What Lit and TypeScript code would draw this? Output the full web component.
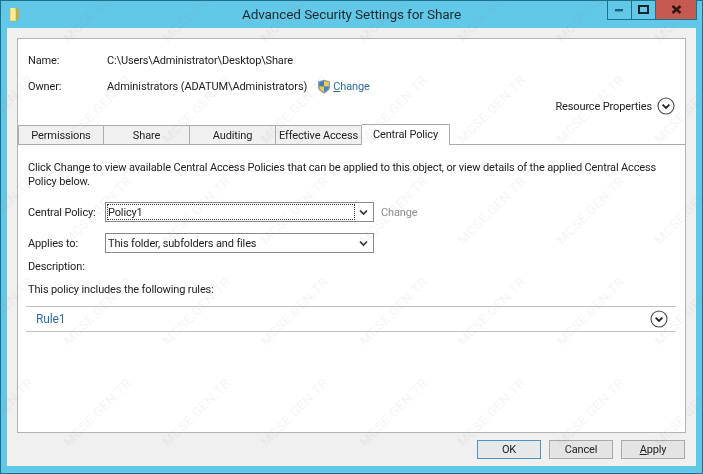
import { LitElement, html, css, svg } from "lit";
import { customElement } from "lit/decorators.js";

const chevron = (size: number) => html`<svg class="chev" width=${size} height=${size} viewBox="0 0 18 18">
  <circle cx="9" cy="9" r="8" fill="#fff" stroke="#4a4a4a" stroke-width="1.1"/>
  <path d="M5.6 7.6 9 11l3.4-3.4" fill="none" stroke="#222" stroke-width="1.8"/>
</svg>`;

const arrow = html`<svg width="9" height="7" viewBox="0 0 9 7"><path d="M1 1.5 4.5 5 8 1.5" fill="none" stroke="#333" stroke-width="1.7"/></svg>`;

const shield = svg`<path d="M7 .8 13 2.6V7.5C13 11 10.2 13.2 7 14.4 3.8 13.2 1 11 1 7.5V2.6Z" fill="#8f9aa6"/>
  <path d="M7 2 7 7.5H2.2V3.4Z" fill="#3c7fc4"/>
  <path d="M7 2 11.8 3.4V7.5H7Z" fill="#f0cf4e"/>
  <path d="M2.2 7.5H7V13C4.4 12 2.4 10.2 2.2 7.5Z" fill="#edc94a"/>
  <path d="M7 7.5H11.8C11.6 10.2 9.6 12 7 13Z" fill="#3f86c9"/>`;

@customElement("app-root")
export class AppRoot extends LitElement {
  static styles = css`
    :host { display: block; width: 703px; height: 474px; overflow: hidden; position: relative;
      font-family: "Roboto", "Open Sans", sans-serif; font-size: 11px; letter-spacing: -0.14px; color: #222; }
    * { box-sizing: border-box; }
    .window { width: 703px; height: 474px; display: flex; flex-direction: column;
      background: #62c8e8; border: 1px solid #1d6f8c; filter: blur(0.35px); }
    .title { height: 27px; flex: none; position: relative; display: flex; align-items: flex-start; justify-content: center; }
    .title-text { font-size: 13.6px; letter-spacing: -0.12px; color: #1c2b33; margin-top: 5px; }
    .folder { position: absolute; left: 8px; top: 5px; }
    .controls { position: absolute; right: 5px; top: -1px; display: flex; height: 20px; }
    .ctl { width: 24px; border: 1px solid #1d6f8c; border-top: none; border-right: none;
      display: flex; align-items: center; justify-content: center; }
    .ctl.close { width: 42px; background: #c75a50; border-right: 1px solid #1d6f8c; }
    .client { flex: none; width: 689px; height: 438px; margin-left: 6px; background: #f0f0f0;
      padding: 10px 10px 0; display: flex; flex-direction: column; }
    .panel { width: 669px; height: 395px; background: #fff; border: 1px solid #b4b4b4; flex: none;
      display: flex; flex-direction: column; }
    .row { display: flex; align-items: center; padding-left: 10px; }
    .row.r1 { margin-top: 13px; height: 16px; }
    .row.r2 { margin-top: 10px; height: 16px; }
    .label { width: 79px; flex: none; }
    .owner { letter-spacing: -0.09px; }
    .link { color: #2f6ea5; }
    .shield { margin-left: 10px; margin-right: 2px; flex: none; }
    .res { display: flex; justify-content: flex-end; align-items: center; gap: 5px; padding-right: 10px;
      margin-top: 2px; height: 20px; }
    .tabs { display: flex; align-items: flex-end; height: 20px; flex: none; margin-top: 9px;
      border-bottom: 1px solid #acacac; }
    .tab { height: 19px; width: 86px; background: #f0f0f0; border: 1px solid #acacac; border-left: none; border-bottom: none;
      display: flex; align-items: center; justify-content: center; }
    .tab:first-child { border-left: 1px solid #acacac; }
    .tab.active { background: #fff; height: 21px; margin-bottom: -1px; width: 88px; padding-bottom: 1px; }
    .body { padding: 16px 10px 0; display: flex; flex-direction: column; flex: 1; }
    .para { line-height: 14px; height: 28px; white-space: nowrap; }
    .form { display: grid; grid-template-columns: 77px 269px auto; align-items: center; margin-top: 13px; row-gap: 11px; }
    .combo { height: 20px; width: 269px; border: 1px solid #8a8a8a; background: #fff; display: flex; align-items: center;
      padding: 1px; }
    .value { flex: 1; height: 100%; display: flex; align-items: center; padding-left: 0; }
    .value.focus { border: 1px dotted #333; }
    .plain { padding-left: 1px; }
    .drop { width: 17px; display: flex; align-items: center; justify-content: center; flex: none; }
    .grey { color: #8d8d8d; margin-left: 7px; }
    .desc { margin-top: 5px; height: 16px; display: flex; align-items: center; }
    .incl { margin-top: 7px; height: 16px; display: flex; align-items: center; }
    .rule { margin: 9px 0 0 -2px; width: 650px; height: 26px; border-top: 1px solid #c0c0c0; border-bottom: 1px solid #c0c0c0;
      display: flex; align-items: center; justify-content: space-between; padding: 0 8px 0 10px; }
    .rule .link { font-size: 12px; }
    .chev { display: block; flex: none; }
    .buttons { display: flex; justify-content: flex-end; gap: 8px; padding-right: 1px; margin-top: 7px; }
    .btn { width: 64px; height: 19px; background: #e4e4e4; border: 1px solid #a8a8a8;
      display: flex; align-items: center; justify-content: center; }
    .btn.default { border-color: #4f93c0; background: #e6e9ec; }
    .marks { position: absolute; inset: 0; pointer-events: none; overflow: hidden; }
    .mark { position: absolute; width: 110px; text-align: center; font-size: 13.5px; letter-spacing: .3px;
      color: rgba(120, 120, 120, .09); transform: rotate(-45deg); white-space: nowrap; filter: blur(0.4px); }
  `;

  private marks() {
    const out = [];
    for (let r = 0; r < 5; r++) {
      for (let c = 0; c < 8; c++) {
        const cx = -1.5 + c * 98.5;
        const cy = 9 + r * 101;
        out.push(html`<span class="mark" style="left:${cx - 55}px;top:${cy - 9}px">MCSE.GEN.TR</span>`);
      }
    }
    return out;
  }

  render() {
    return html`
      <div class="window">
        <div class="title">
          <svg class="folder" width="14" height="16" viewBox="0 0 14 16">
            <path d="M1 2h5l1 1.2V15H1Z" fill="#f4d66a"/>
            <path d="M7 2.5h3V12L7 15Z" fill="#c9a83c"/>
            <path d="M2 2h4v12H2Z" fill="#fbe9a0"/>
          </svg>
          <span class="title-text">Advanced Security Settings for Share</span>
          <div class="controls">
            <div class="ctl"><svg width="9" height="4"><rect y="1" width="8" height="2.4" fill="#1d5f78"/></svg></div>
            <div class="ctl"><svg width="11" height="9"><rect x="1" y="1" width="9" height="7" fill="none" stroke="#10242e" stroke-width="2"/></svg></div>
            <div class="ctl close"><svg width="11" height="9" viewBox="0 0 11 9"><path d="M1.5 1 9.5 8M9.5 1 1.5 8" stroke="#2a1512" stroke-width="2.4"/></svg></div>
          </div>
        </div>
        <div class="client">
          <div class="panel">
            <div class="row r1"><span class="label">Name:</span><span>C:\\Users\\Administrator\\Desktop\\Share</span></div>
            <div class="row r2"><span class="label">Owner:</span><span class="owner">Administrators (ADATUM\\Administrators)</span>
              <svg class="shield" width="14" height="15" viewBox="0 0 14 15">${shield}</svg>
              <span class="link"><u>C</u>hange</span></div>
            <div class="res"><span>Resource Properties</span>${chevron(18)}</div>
            <div class="tabs">
              <div class="tab">Permissions</div>
              <div class="tab">Share</div>
              <div class="tab">Auditing</div>
              <div class="tab">Effective Access</div>
              <div class="tab active">Central Policy</div>
            </div>
            <div class="body">
              <div class="para">Click Change to view available Central Access Policies that can be applied to this object, or view details of the applied Central Access<br>Policy below.</div>
              <div class="form">
                <span>Central Policy:</span>
                <div class="combo"><div class="value focus">Policy1</div><div class="drop">${arrow}</div></div>
                <span class="grey">Change</span>
                <span>Applies to:</span>
                <div class="combo"><div class="value plain">This folder, subfolders and files</div><div class="drop">${arrow}</div></div>
                <span></span>
              </div>
              <div class="desc">Description:</div>
              <div class="incl">This policy includes the following rules:</div>
              <div class="rule"><span class="link">Rule1</span>${chevron(18)}</div>
            </div>
          </div>
          <div class="buttons">
            <div class="btn default">OK</div>
            <div class="btn">Cancel</div>
            <div class="btn"><span><u>A</u>pply</span></div>
          </div>
        </div>
      </div>
      <div class="marks">${this.marks()}</div>
    `;
  }
}
